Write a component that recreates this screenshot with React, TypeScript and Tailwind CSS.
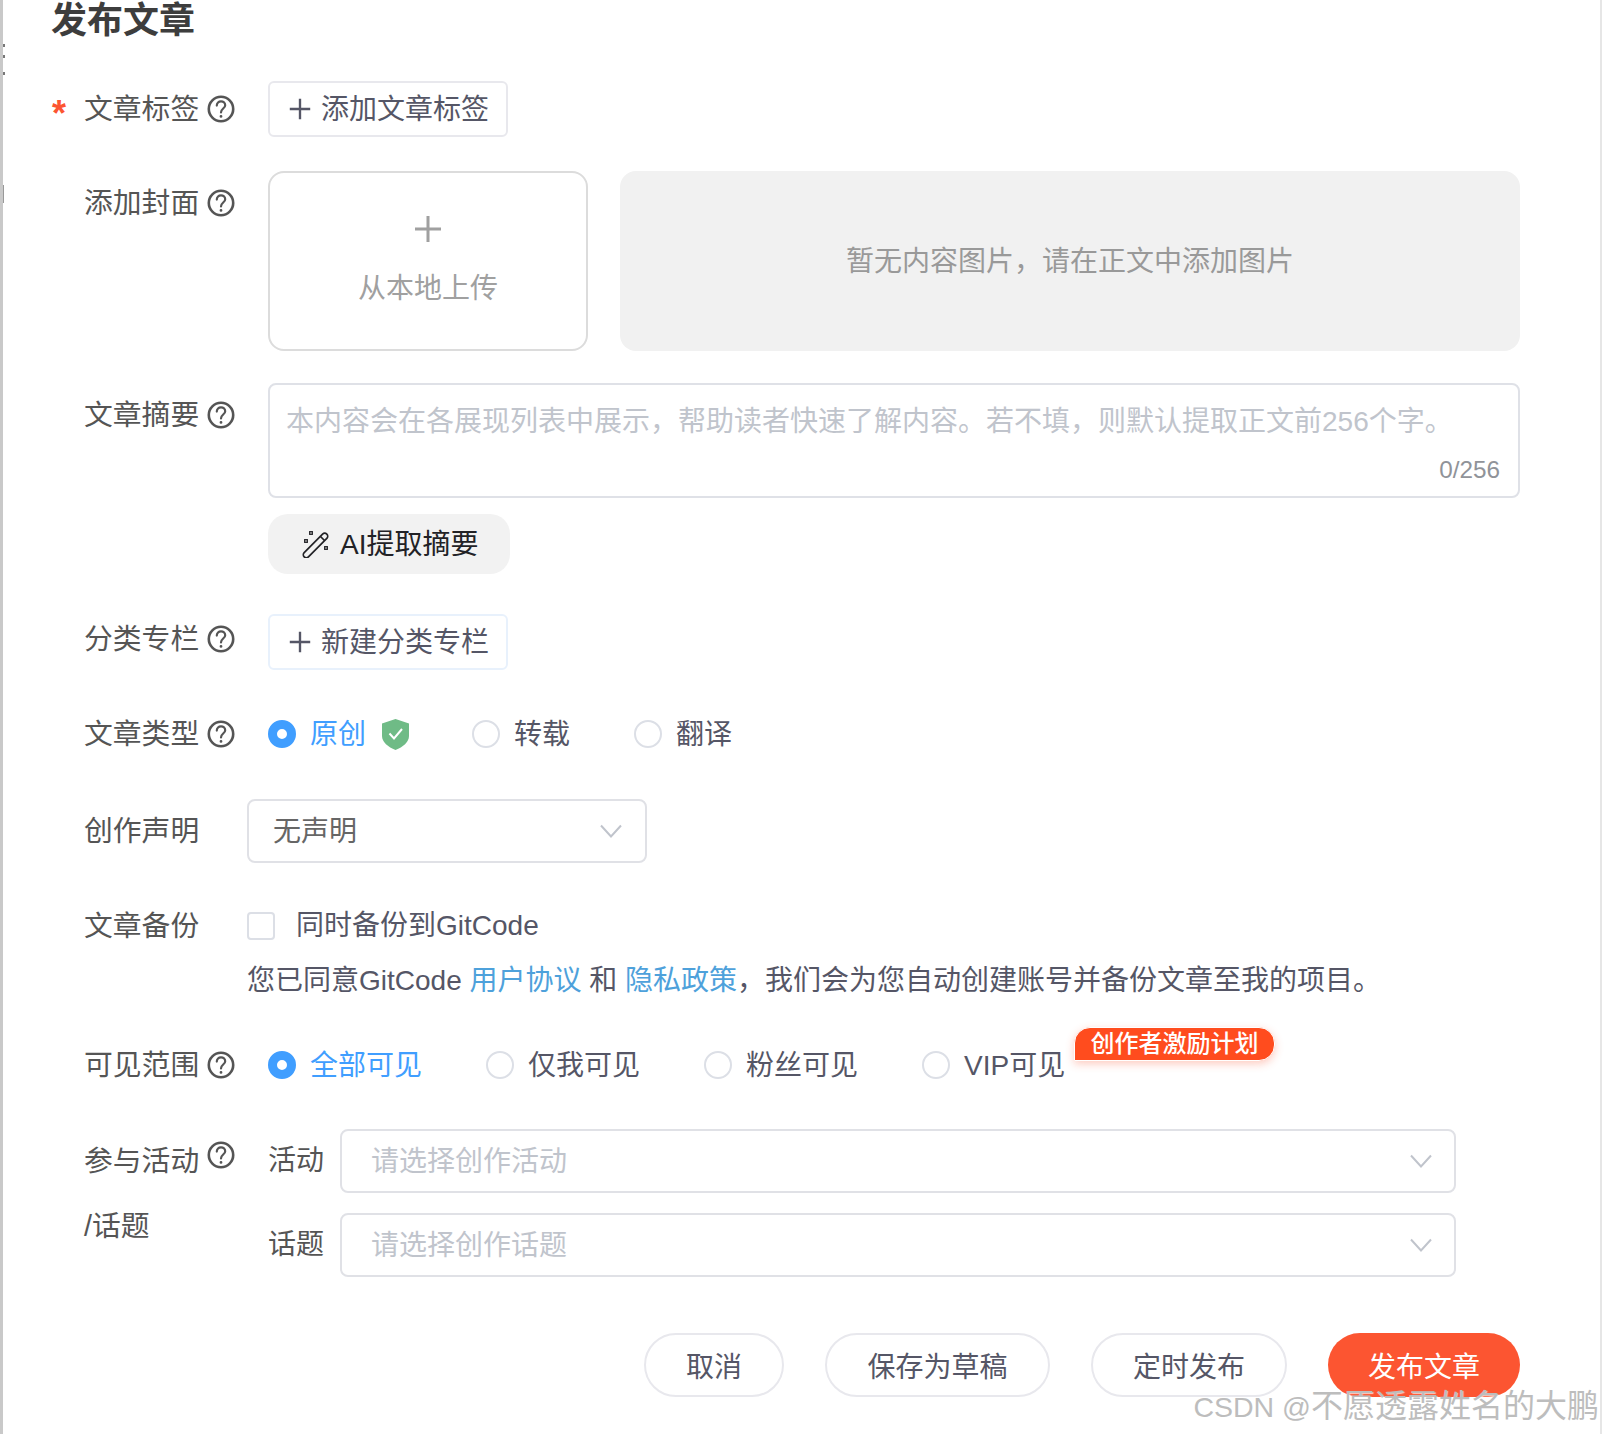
import React from 'react';

function HelpIcon({ className = '' }: { className?: string }) {
  return (
    <svg className={`w-[28px] h-[28px] shrink-0 ${className}`} viewBox="0 0 28 28" fill="none" stroke="#555" strokeWidth="2.6" strokeLinecap="round">
      <circle cx="14" cy="14" r="12.2" />
      <path d="M9.8 10.6c0-2.6 1.9-4.3 4.2-4.3s4.2 1.7 4.2 3.9c0 3.3-4.2 3.4-4.2 7.2" strokeWidth="2.2" />
      <circle cx="14" cy="21.4" r="0.7" fill="#555" strokeWidth="1.4" />
    </svg>
  );
}

function Chevron() {
  return (
    <svg className="w-[22px] h-[14px] shrink-0" viewBox="0 0 22 14" fill="none" stroke="#c0c4cc" strokeWidth="2">
      <path d="M1 1.5 11 12.5 21 1.5" />
    </svg>
  );
}

function PlusIcon({ size, color, width }: { size: number; color: string; width: number }) {
  return (
    <svg width={size} height={size} viewBox="0 0 28 28" fill="none" stroke={color} strokeWidth={width}>
      <path d="M14 1v26M1 14h26" />
    </svg>
  );
}

function Label({ text, help = true, required = false, className = '' }: { text: string; help?: boolean; required?: boolean; className?: string }) {
  return (
    <div className={`flex items-center h-[32px] text-[28.8px] text-[#555] ${className}`}>
      <span className={`w-[32px] pt-[10px] text-[36px] font-bold text-[#fc5531] ${required ? '' : 'invisible'}`}>*</span>
      <span>{text}</span>
      {help && <HelpIcon className="ml-[8px]" />}
    </div>
  );
}

function Radio({ label, checked = false, className = '' }: { label: string; checked?: boolean; className?: string }) {
  return (
    <div className={`flex items-center ${className}`}>
      {checked ? (
        <span className="w-[28px] h-[28px] rounded-full border-[9px] border-[#409eff] bg-white" />
      ) : (
        <span className="w-[28px] h-[28px] rounded-full border-2 border-[#dcdfe6] bg-white" />
      )}
      <span className={`ml-[14px] pt-[2px] ${checked ? 'text-[#409eff]' : 'text-[#555666]'}`}>{label}</span>
    </div>
  );
}

function Select({ text, placeholder = false, className = '' }: { text: string; placeholder?: boolean; className?: string }) {
  return (
    <div className={`flex items-center justify-between h-[64px] border-2 border-[#e0e1e6] rounded-[8px] ${className}`}>
      <span className={`pt-[2px] ${placeholder ? 'text-[#c0c4cc]' : 'text-[#666]'}`}>{text}</span>
      <Chevron />
    </div>
  );
}

function AddButton({ text, borderClass }: { text: string; borderClass: string }) {
  return (
    <button className={`flex items-center w-[240px] h-[56px] pl-[19px] border-2 rounded-[6px] bg-white text-[#555666] ${borderClass}`}>
      <PlusIcon size={22} color="#555666" width={3} />
      <span className="ml-[10px] pt-[1px]">{text}</span>
    </button>
  );
}

function PillButton({ text, className = '' }: { text: string; className?: string }) {
  return (
    <button className={`h-[64px] pt-[6px] rounded-full border-2 border-[#e8e8ed] bg-white text-[#555666] ${className}`}>{text}</button>
  );
}

export default function App() {
  return (
    <div className="relative w-[1602px] h-[1434px] overflow-hidden bg-white border-l-[3px] border-r-2 border-l-[#c9c9c9] border-r-[#e6e6e6] pl-[49px] pr-[80px] text-[28px] leading-[32px] [font-family:'Liberation_Sans','Noto_Sans_CJK_SC',sans-serif]">
      <span className="absolute left-0 top-[44px] w-[2px] h-[3px] bg-[#777]" />
      <span className="absolute left-0 top-[55px] w-[2px] h-[3px] bg-[#777]" />
      <span className="absolute left-0 top-[72px] w-[2px] h-[3px] bg-[#777]" />
      <span className="absolute left-0 top-[185px] w-[1px] h-[18px] bg-[#999]" />

      <h1 className="h-[38px] -ml-[1px] text-[36px] leading-[42px] font-bold text-[#3d3d3d]">发布文章</h1>

      <div className="flex items-center mt-[43px]">
        <div className="w-[216px]">
          <Label text="文章标签" required />
        </div>
        <AddButton text="添加文章标签" borderClass="border-[#e8e8ed]" />
      </div>

      <div className="flex mt-[34px]">
        <div className="w-[216px] pt-[16px]">
          <Label text="添加封面" />
        </div>
        <div className="flex flex-1 gap-[32px] h-[180px]">
          <div className="flex flex-col items-center w-[320px] border-2 border-[#dcdcdc] rounded-[16px] pt-[42px] text-[#a0a0a0]">
            <PlusIcon size={28} color="#a0a0a0" width={3} />
            <span className="mt-[30px]">从本地上传</span>
          </div>
          <div className="flex flex-1 items-center justify-center pt-[2px] rounded-[16px] bg-[#f1f1f1] text-[#999]">暂无内容图片，请在正文中添加图片</div>
        </div>
      </div>

      <div className="flex mt-[32px]">
        <div className="w-[216px] pt-[16px]">
          <Label text="文章摘要" />
        </div>
        <div className="flex-1">
          <div className="flex flex-col h-[115px] border-2 border-[#dfe1e7] rounded-[8px] pl-[16px] pr-[18px] pt-[21px] text-[#c0c4cc]">
            <span>本内容会在各展现列表中展示，帮助读者快速了解内容。若不填，则默认提取正文前256个字。</span>
            <span className="self-end mt-[18px] text-[24.3px] leading-[28px] text-[#909399]">0/256</span>
          </div>
          <button className="flex items-center w-[242px] h-[60px] mt-[16px] pl-[34px] rounded-[20px] bg-[#f2f2f2] text-[#222226]">
            <svg className="w-[28px] h-[28px]" viewBox="0 0 28 28" fill="none" stroke="#222226" strokeWidth="1.7">
              <rect x="-3" y="-16" width="6" height="32" rx="3" transform="translate(13.5 15.5) rotate(45)" />
              <path d="M18.5 6.5l4 4" />
              <rect x="7.7" y="1.7" width="2.6" height="2.6" strokeWidth="1.3" />
              <rect x="2.7" y="9.7" width="2.6" height="2.6" strokeWidth="1.3" />
              <rect x="22.7" y="16.7" width="2.6" height="2.6" strokeWidth="1.3" />
            </svg>
            <span className="ml-[10px] pt-[2px]">AI提取摘要</span>
          </button>
        </div>
      </div>

      <div className="flex items-center mt-[40px]">
        <div className="w-[216px] pb-[6px]">
          <Label text="分类专栏" />
        </div>
        <AddButton text="新建分类专栏" borderClass="border-[#e8f1fc]" />
      </div>

      <div className="flex items-center h-[32px] mt-[48px]">
        <div className="w-[216px]">
          <Label text="文章类型" />
        </div>
        <Radio label="原创" checked />
        <svg className="w-[27px] h-[31px] ml-[16px]" viewBox="0 0 27 31">
          <path d="M13.5 0 27 4.5V17c0 6-6 11-13.5 14C6 28 0 23 0 17V4.5Z" fill="#6fbb86" />
          <path d="M7.5 14.5l4.5 5 8-9.5" fill="none" stroke="#fff" strokeWidth="2" />
        </svg>
        <Radio label="转载" className="ml-[63px]" />
        <Radio label="翻译" className="ml-[64px]" />
      </div>

      <div className="flex items-center mt-[49px]">
        <div className="w-[195px]">
          <Label text="创作声明" help={false} />
        </div>
        <Select text="无声明" className="w-[400px] pl-[24px] pr-[23px]" />
      </div>

      <div className="flex mt-[47px]">
        <div className="w-[195px]">
          <Label text="文章备份" help={false} />
        </div>
        <div>
          <div className="flex items-center h-[32px]">
            <span className="w-[28px] h-[28px] border-2 border-[#dcdfe6] rounded-[4px] bg-white" />
            <span className="ml-[21px] text-[#555666]">同时备份到GitCode</span>
          </div>
          <p className="mt-[23px] whitespace-nowrap text-[#555666]">
            您已同意GitCode <span className="text-[#4ea1db]">用户协议</span> 和 <span className="text-[#4ea1db]">隐私政策</span>，我们会为您自动创建账号并备份文章至我的项目。
          </p>
        </div>
      </div>

      <div className="flex items-center h-[32px] mt-[52px]">
        <div className="w-[216px]">
          <Label text="可见范围" />
        </div>
        <Radio label="全部可见" checked />
        <Radio label="仅我可见" className="ml-[64px]" />
        <Radio label="粉丝可见" className="ml-[64px]" />
        <div className="relative ml-[64px]">
          <Radio label="VIP可见" />
          <span className="absolute left-[152px] top-[-21px] flex items-center justify-center w-[201px] h-[34px] whitespace-nowrap rounded-t-[16px] rounded-br-[16px] border border-white bg-[#ff4c1e] text-[24px] font-medium text-white shadow-[0_3px_8px_rgba(252,85,49,0.3)]">创作者激励计划</span>
        </div>
      </div>

      <div className="flex mt-[48px]">
        <div className="w-[216px]">
          <div className="flex items-center h-[32px] mt-[16px] text-[28.8px] text-[#555]">
            <span className="w-[32px]" />
            <span>参与活动</span>
            <HelpIcon className="ml-[8px] -mt-[12px]" />
          </div>
          <div className="h-[32px] mt-[33px] pl-[32px] text-[28.8px] text-[#555]">/话题</div>
        </div>
        <div className="flex flex-col gap-[20px]">
          <div className="flex items-center text-[#555]">
            <span className="w-[72px]">活动</span>
            <Select text="请选择创作活动" placeholder className="w-[1116px] pl-[29px] pr-[22px]" />
          </div>
          <div className="flex items-center text-[#555]">
            <span className="w-[72px]">话题</span>
            <Select text="请选择创作话题" placeholder className="w-[1116px] pl-[29px] pr-[22px]" />
          </div>
        </div>
      </div>

      <div className="flex justify-end gap-[41px] mt-[56px]">
        <PillButton text="取消" className="w-[140px]" />
        <PillButton text="保存为草稿" className="w-[225px]" />
        <PillButton text="定时发布" className="w-[196px]" />
        <button className="w-[192px] h-[64px] pt-[6px] rounded-full bg-[#fc5531] text-white">发布文章</button>
      </div>

      <div className="absolute right-[1px] bottom-[7px] whitespace-nowrap text-[32px] leading-[40px] text-[#bdbdbd] [text-shadow:1px_1px_1px_rgba(255,255,255,0.7)]">
        <span className="text-[28.5px]">CSDN @</span>不愿透露姓名的大鹏
      </div>
    </div>
  );
}
